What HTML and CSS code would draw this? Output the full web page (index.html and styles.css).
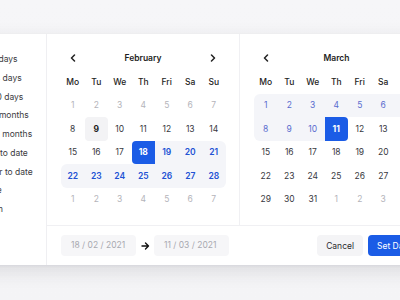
FILE: index.html
```html
<!DOCTYPE html>
<html lang="en">
<head>
    <meta charset="UTF-8">
    <meta name="viewport" content="width=device-width, initial-scale=1.0">
    <title>Date Range Picker</title>
    <link rel="stylesheet" href="styles.css">
</head>
<body>
    <div class="picker">
        <aside class="presets">
            <ul>
                <li>Last 7 days</li>
                <li>Last 14 days</li>
                <li>Last 30 days</li>
                <li>Last 3 months</li>
                <li>Last 12 months</li>
                <li>Month to date</li>
                <li>Quarter to date</li>
                <li>All time</li>
                <li>Custom</li>
            </ul>
        </aside>
        <div class="main">
            <div class="months">
                <section class="month">
                    <div class="month-head">
                        <span class="nav"><svg width="6" height="8" viewBox="0 0 6 8"><path d="M4.5 1L1.5 4l3 3" fill="none" stroke="#222" stroke-width="1.5" stroke-linecap="round" stroke-linejoin="round"/></svg></span>
                        <span class="month-name">February</span>
                        <span class="nav"><svg width="6" height="8" viewBox="0 0 6 8"><path d="M1.5 1l3 3-3 3" fill="none" stroke="#222" stroke-width="1.5" stroke-linecap="round" stroke-linejoin="round"/></svg></span>
                    </div>
                    <div class="grid">
                        <span class="wd">Mo</span><span class="wd">Tu</span><span class="wd">We</span><span class="wd">Th</span><span class="wd">Fri</span><span class="wd">Sa</span><span class="wd">Su</span>
                        <span class="day muted">1</span><span class="day muted">2</span><span class="day muted">3</span><span class="day muted">4</span><span class="day muted">5</span><span class="day muted">6</span><span class="day muted">7</span>
                        <span class="day">8</span><span class="day today">9</span><span class="day">10</span><span class="day">11</span><span class="day">12</span><span class="day">13</span><span class="day">14</span>
                        <span class="day">15</span><span class="day">16</span><span class="day">17</span><span class="day start">18</span><span class="day range">19</span><span class="day range">20</span><span class="day range tr">21</span>
                        <span class="day range tl bl">22</span><span class="day range">23</span><span class="day range">24</span><span class="day range">25</span><span class="day range">26</span><span class="day range">27</span><span class="day range br">28</span>
                        <span class="day muted">1</span><span class="day muted">2</span><span class="day muted">3</span><span class="day muted">4</span><span class="day muted">5</span><span class="day muted">6</span><span class="day muted">7</span>
                    </div>
                </section>
                <section class="month">
                    <div class="month-head">
                        <span class="nav"><svg width="6" height="8" viewBox="0 0 6 8"><path d="M4.5 1L1.5 4l3 3" fill="none" stroke="#222" stroke-width="1.5" stroke-linecap="round" stroke-linejoin="round"/></svg></span>
                        <span class="month-name">March</span>
                        <span class="nav"></span>
                    </div>
                    <div class="grid">
                        <span class="wd">Mo</span><span class="wd">Tu</span><span class="wd">We</span><span class="wd">Th</span><span class="wd">Fri</span><span class="wd">Sa</span><span class="wd">Su</span>
                        <span class="day range light tl">1</span><span class="day range light">2</span><span class="day range light">3</span><span class="day range light">4</span><span class="day range light">5</span><span class="day range light">6</span><span class="day range light">7</span>
                        <span class="day range light bl">8</span><span class="day range light">9</span><span class="day range light">10</span><span class="day end">11</span><span class="day">12</span><span class="day">13</span><span class="day">14</span>
                        <span class="day">15</span><span class="day">16</span><span class="day">17</span><span class="day">18</span><span class="day">19</span><span class="day">20</span><span class="day">21</span>
                        <span class="day">22</span><span class="day">23</span><span class="day">24</span><span class="day">25</span><span class="day">26</span><span class="day">27</span><span class="day">28</span>
                        <span class="day">29</span><span class="day">30</span><span class="day">31</span><span class="day muted">1</span><span class="day muted">2</span><span class="day muted">3</span><span class="day muted">4</span>
                    </div>
                </section>
            </div>
            <footer class="actions">
                <div class="inputs">
                    <span class="date-input">18 / 02 / 2021</span>
                    <span class="arrow"><svg width="9" height="8" viewBox="0 0 9 8"><path d="M1 4h6.5M4.5 1l3 3-3 3" fill="none" stroke="#111" stroke-width="1.4" stroke-linecap="round" stroke-linejoin="round"/></svg></span>
                    <span class="date-input">11 / 03 / 2021</span>
                </div>
                <div class="buttons">
                    <button class="btn">Cancel</button>
                    <button class="btn primary">Set Date</button>
                </div>
            </footer>
        </div>
    </div>
</body>
</html>
```

FILE: styles.css
```css
body {
    margin: 0;
    font-family: 'Inter', 'Noto Sans', sans-serif;
    background: linear-gradient(180deg, #f6f6f8 0%, #f4f4f6 100%);
    color: #2a2a2e;
    overflow: hidden;
    height: 300px;
}

.picker {
    display: flex;
    width: max-content;
    margin-top: 34px;
    margin-left: -44px;
    background: #fff;
    box-shadow: 0 6px 18px rgba(40, 40, 60, 0.12), 0 1px 3px rgba(40, 40, 60, 0.06);
}

.presets {
    width: 90px;
    border-right: 1px solid #efeff2;
    font-size: 8.5px;
    color: #3a3a40;
}
.presets ul {
    list-style: none;
    margin: 0;
    padding: 16px 0 0 16px;
}
.presets li {
    height: 18.75px;
    line-height: 18.75px;
    white-space: nowrap;
}

.main {
    display: flex;
    flex-direction: column;
}
.months {
    display: flex;
}
.month {
    width: 193px;
    padding: 12px 14px 14px;
    box-sizing: border-box;
    border-right: 1px solid #f0f0f3;
}
.month:last-child {
    border-right: none;
}

.month-head {
    display: flex;
    align-items: center;
    justify-content: space-between;
    height: 24px;
    padding: 0 9px;
    font-size: 8.5px;
    font-weight: 600;
    color: #1d1d22;
}
.nav {
    width: 6px;
    display: flex;
}

.grid {
    display: grid;
    grid-template-columns: repeat(7, 23.5px);
    grid-auto-rows: 23.5px;
}
.wd, .day {
    display: flex;
    align-items: center;
    justify-content: center;
    font-size: 8.5px;
}
.wd {
    font-weight: 500;
    color: #1d1d22;
}
.day {
    color: #38383e;
}
.day.muted {
    color: #b4b4ba;
}
.day.today {
    background: #f3f3f5;
    border-radius: 4px;
    font-weight: 700;
    color: #1d1d22;
}
.day.range {
    background: #f4f5f9;
    color: #2152d4;
    font-weight: 600;
}
.day.range.light {
    color: #5a6ccf;
    font-weight: 400;
}
.day.start, .day.end {
    background: #1b5ce6;
    color: #fff;
    font-weight: 700;
}
.day.start {
    border-radius: 4px 0 0 4px;
}
.day.end {
    border-radius: 0 4px 4px 0;
}
.tl { border-top-left-radius: 6px; }
.tr { border-top-right-radius: 6px; }
.bl { border-bottom-left-radius: 6px; }
.br { border-bottom-right-radius: 6px; }

.actions {
    display: flex;
    align-items: center;
    justify-content: space-between;
    height: 39px;
    padding: 0 14px;
    border-top: 1px solid #f0f0f3;
}
.inputs {
    display: flex;
    align-items: center;
}
.date-input {
    width: 75px;
    height: 21px;
    line-height: 21px;
    box-sizing: border-box;
    padding-left: 10px;
    background: #f6f6f8;
    border-radius: 4px;
    font-size: 8.5px;
    color: #a9a9b0;
}
.arrow {
    width: 18px;
    display: flex;
    justify-content: center;
}
.buttons {
    display: flex;
    gap: 5px;
}
.btn {
    height: 21px;
    padding: 0 9px;
    border: none;
    border-radius: 4px;
    background: #f4f4f6;
    font-family: inherit;
    font-size: 8.5px;
    color: #2a2a2e;
    white-space: nowrap;
}
.btn.primary {
    background: #1b5ce6;
    color: #fff;
    width: 51px;
    text-align: left;
}
```
